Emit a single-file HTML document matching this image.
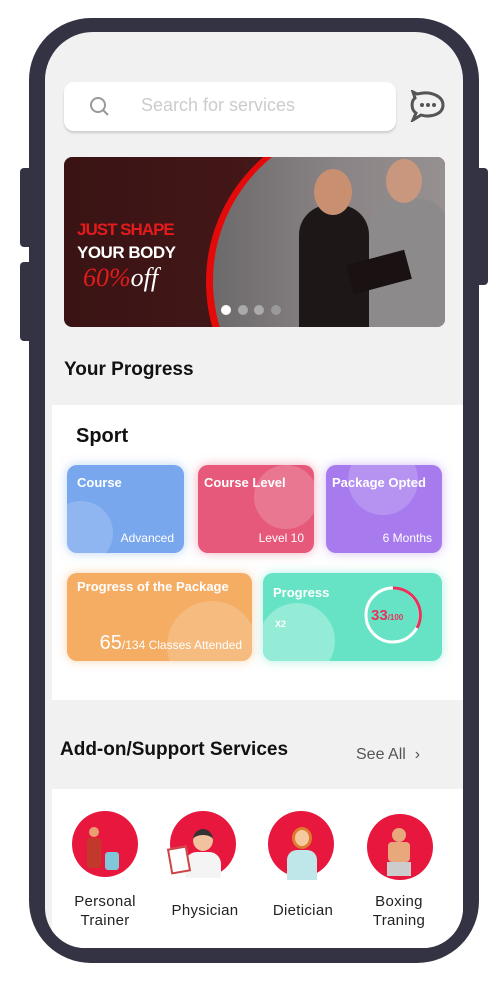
<!DOCTYPE html>
<html><head><meta charset="utf-8"><style>
*{margin:0;padding:0;box-sizing:border-box}
body{width:500px;height:982px;background:#fff;position:relative;overflow:hidden;font-family:"Liberation Sans","DejaVu Sans",sans-serif}
.a{position:absolute}
.frame{left:29px;top:18px;width:450px;height:945px;background:#343344;border-radius:62px}
.screen{left:45px;top:32px;width:418px;height:916px;background:#f1f1f1;border-radius:48px 48px 40px 40px;overflow:hidden}
.btn{background:#343344;border-radius:4px}
.card{border-radius:10px;color:#fff;font-weight:bold;overflow:hidden}
.card .t{position:absolute;left:10px;top:10px;font-size:13px}
.card .b{position:absolute;right:10px;bottom:8px;font-size:12px;font-weight:normal}
.circ{position:absolute;border-radius:50%;background:rgba(255,255,255,.18)}
.svc{width:66px;height:66px;border-radius:50%;background:#e8173e}
.lbl{font-size:15px;color:#222;text-align:center;line-height:19px;width:90px;letter-spacing:0.3px}
</style></head><body>
<div class="a btn" style="left:20px;top:168px;width:14px;height:79px"></div>
<div class="a btn" style="left:20px;top:262px;width:14px;height:79px"></div>
<div class="a btn" style="left:474px;top:168px;width:14px;height:117px"></div>
<div class="a frame"></div>
<div class="a screen">
 <div class="a" style="left:19px;top:50px;width:332px;height:49px;background:#fff;border-radius:10px;box-shadow:0 2px 2px #ccc"></div>
 <svg class="a" style="left:44px;top:64px" width="22" height="22" viewBox="0 0 22 22"><circle cx="9" cy="9" r="7" fill="none" stroke="#999" stroke-width="2"/><line x1="14" y1="14" x2="19" y2="19" stroke="#999" stroke-width="2"/></svg>
 <div class="a" style="left:96px;top:63px;font-size:18px;color:#ccc">Search for services</div>
 <svg class="a" style="left:364px;top:58px" width="38" height="32" viewBox="0 0 38 32"><path d="M8 4 L4 2 L6 8 C2 11 2 20 7 23 L4 30 L12 25 C22 28 34 24 34 15 C34 6 22 2 14 3 Z" fill="none" stroke="#555" stroke-width="3"/><circle cx="13" cy="15" r="2" fill="#555"/><circle cx="19" cy="15" r="2" fill="#555"/><circle cx="25" cy="15" r="2" fill="#555"/></svg>
 <div class="a" style="left:19px;top:125px;width:381px;height:170px;border-radius:8px;overflow:hidden;background:linear-gradient(90deg,#3a1314,#4e1b1c)">
  <div class="a" style="left:142px;top:-40px;width:330px;height:330px;border-radius:50%;background:#e50a0a"></div>
  <div class="a" style="left:149px;top:-36px;width:320px;height:320px;border-radius:50%;background:linear-gradient(90deg,#6d6a6c,#8a8486 40%,#a09a98)"></div>
  <div class="a" style="left:235px;top:48px;width:70px;height:122px;background:#1d1718;border-radius:30px 30px 0 0"></div>
  <div class="a" style="left:250px;top:12px;width:38px;height:46px;background:#c89070;border-radius:50%"></div>
  <div class="a" style="left:305px;top:42px;width:80px;height:128px;background:#8c8a8a;border-radius:30px 30px 0 0"></div>
  <div class="a" style="left:322px;top:2px;width:36px;height:44px;background:#c9977d;border-radius:50%"></div>
  <div class="a" style="left:285px;top:100px;width:60px;height:30px;background:#1a1212;transform:rotate(-15deg)"></div>
  <div class="a" style="left:13px;top:63px;font-size:17px;font-weight:bold;color:#e41b1b;letter-spacing:-1px">JUST SHAPE</div>
  <div class="a" style="left:13px;top:86px;font-size:17px;font-weight:bold;color:#fff;letter-spacing:-0.5px">YOUR BODY</div>
  <div class="a" style="left:19px;top:106px;font-size:26px;font-style:italic;font-family:'Liberation Serif',serif"><span style="color:#e41b1b">60%</span><span style="color:#fff">off</span></div>
  <div class="a" style="left:157px;top:148px;width:10px;height:10px;border-radius:50%;background:#fff"></div>
  <div class="a" style="left:174px;top:148px;width:10px;height:10px;border-radius:50%;background:#aaa"></div>
  <div class="a" style="left:190px;top:148px;width:10px;height:10px;border-radius:50%;background:#aaa"></div>
  <div class="a" style="left:207px;top:148px;width:10px;height:10px;border-radius:50%;background:#999"></div>
 </div>
 <div class="a" style="left:19px;top:327px;font-size:19px;font-weight:bold;color:#111">Your Progress</div>
 <div class="a" style="left:7px;top:373px;width:411px;height:295px;background:#fff"></div>
 <div class="a" style="left:31px;top:393px;font-size:20px;font-weight:bold;color:#111">Sport</div>
 <div class="a card" style="left:22px;top:433px;width:117px;height:88px;background:#78a7ee;box-shadow:0 0 10px rgba(120,167,238,.5)"><div class="circ" style="left:-18px;top:36px;width:64px;height:64px"></div><div class="t">Course</div><div class="b">Advanced</div></div>
 <div class="a card" style="left:153px;top:433px;width:116px;height:88px;background:#e6597b;box-shadow:0 0 10px rgba(230,89,123,.5)"><div class="circ" style="left:56px;top:0;width:64px;height:64px"></div><div class="t" style="left:6px">Course Level</div><div class="b">Level 10</div></div>
 <div class="a card" style="left:281px;top:433px;width:116px;height:88px;background:#a77bee;box-shadow:0 0 10px rgba(167,123,238,.5)"><div class="circ" style="left:22px;top:-20px;width:70px;height:70px"></div><div class="t" style="left:6px">Package Opted</div><div class="b">6 Months</div></div>
 <div class="a card" style="left:22px;top:541px;width:185px;height:88px;background:#f4ad63;box-shadow:0 0 10px rgba(244,173,99,.5)"><div class="circ" style="left:100px;top:28px;width:90px;height:90px"></div><div class="t" style="top:6px">Progress of the Package</div><div class="b" style="bottom:6px"><span style="font-size:20px">65</span>/134 Classes Attended</div></div>
 <div class="a card" style="left:218px;top:541px;width:179px;height:88px;background:#66e3c4;box-shadow:0 0 10px rgba(102,227,196,.5)"><div class="circ" style="left:-4px;top:30px;width:76px;height:76px;background:rgba(255,255,255,.3)"></div><div class="t" style="top:12px">Progress</div><div class="a" style="left:12px;top:46px;font-size:9px">X2</div>
  <svg class="a" style="left:100px;top:12px" width="60" height="60" viewBox="0 0 60 60"><circle cx="30" cy="30" r="27" fill="none" stroke="#fff" stroke-width="3"/><path d="M30 3 A27 27 0 0 1 54 43" fill="none" stroke="#e8325c" stroke-width="3"/><text x="8" y="35" font-size="15" fill="#e8325c" font-family="Liberation Sans" font-weight="bold">33<tspan font-size="8">/100</tspan></text></svg></div>
 <div class="a" style="left:15px;top:707px;font-size:19px;font-weight:bold;color:#111">Add-on/Support Services</div>
 <div class="a" style="left:311px;top:714px;font-size:16px;color:#555">See All &nbsp;›</div>
 <div class="a" style="left:7px;top:757px;width:411px;height:170px;background:#fff"></div>
 <div class="a svc" style="left:27px;top:779px"></div>
 <div class="a svc" style="left:125px;top:779px"></div>
 <div class="a svc" style="left:223px;top:779px"></div>
 <div class="a svc" style="left:322px;top:782px"></div>
 <!-- simple figures -->
 <div class="a" style="left:44px;top:795px;width:10px;height:10px;border-radius:50%;background:#e8a070"></div>
 <div class="a" style="left:42px;top:806px;width:14px;height:30px;background:#c0392b;border-radius:3px"></div>
 <div class="a" style="left:60px;top:820px;width:14px;height:18px;background:#7fc7d9;border-radius:3px"></div>
 <div class="a" style="left:148px;top:797px;width:20px;height:22px;border-radius:50%;background:#f2c29e;border-top:6px solid #333"></div>
 <div class="a" style="left:140px;top:820px;width:36px;height:26px;background:#f4f4f4;border-radius:12px 12px 0 0"></div>
 <div class="a" style="left:124px;top:815px;width:20px;height:26px;background:#fff;border:2px solid #c44;transform:rotate(-10deg)"></div>
 <div class="a" style="left:247px;top:795px;width:20px;height:22px;border-radius:50%;background:#f5c9a0;border:3px solid #e07a2e"></div>
 <div class="a" style="left:242px;top:818px;width:30px;height:30px;background:#bfe7ea;border-radius:10px 10px 0 0"></div>
 <div class="a" style="left:347px;top:796px;width:14px;height:14px;border-radius:50%;background:#e8a87c"></div>
 <div class="a" style="left:343px;top:810px;width:22px;height:20px;background:#e8a87c;border-radius:4px"></div>
 <div class="a" style="left:342px;top:830px;width:24px;height:14px;background:#ccc"></div>
 <div class="a lbl" style="left:15px;top:860px">Personal Trainer</div>
 <div class="a lbl" style="left:115px;top:869px">Physician</div>
 <div class="a lbl" style="left:213px;top:869px">Dietician</div>
 <div class="a lbl" style="left:309px;top:860px">Boxing Traning</div>
</div>
</body></html>
